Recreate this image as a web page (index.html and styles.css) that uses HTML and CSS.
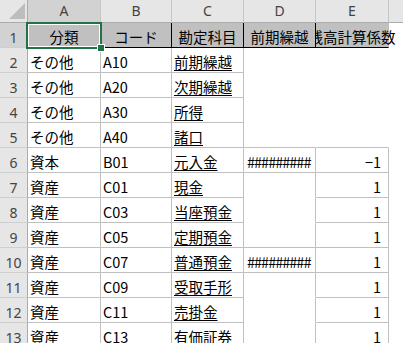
FILE: index.html
```html
<!DOCTYPE html>
<html lang="ja">
<head>
    <meta charset="UTF-8">
    <meta name="viewport" content="width=device-width, initial-scale=1.0">
    <title>勘定科目</title>
    <link rel="stylesheet" href="styles.css">
</head>
<body>
    <div class="sheet">
        <!-- column headers -->
        <div class="corner"></div>
        <div class="hd sel">A</div>
        <div class="hd">B</div>
        <div class="hd">C</div>
        <div class="hd">D</div>
        <div class="hd">E</div>
        <div class="hd">F</div>

        <!-- row 1: titles -->
        <div class="rh sel">1</div>
        <div class="c ttl">分類</div>
        <div class="c ttl">コード</div>
        <div class="c ttl">勘定科目</div>
        <div class="c ttl">前期繰越</div>
        <div class="c ttl last">残高計算係数</div>
        <div class="c"></div>

        <div class="rh">2</div>
        <div class="c g">その他</div>
        <div class="c g">A10</div>
        <div class="c g"><span class="u">前期繰越</span></div>
        <div class="c"></div>
        <div class="c"></div>
        <div class="c"></div>

        <div class="rh">3</div>
        <div class="c g">その他</div>
        <div class="c g">A20</div>
        <div class="c g"><span class="u">次期繰越</span></div>
        <div class="c"></div>
        <div class="c"></div>
        <div class="c"></div>

        <div class="rh">4</div>
        <div class="c g">その他</div>
        <div class="c g">A30</div>
        <div class="c g"><span class="u">所得</span></div>
        <div class="c"></div>
        <div class="c"></div>
        <div class="c"></div>

        <div class="rh">5</div>
        <div class="c g">その他</div>
        <div class="c g">A40</div>
        <div class="c g"><span class="u">諸口</span></div>
        <div class="c gb"></div>
        <div class="c gb"></div>
        <div class="c"></div>

        <div class="rh">6</div>
        <div class="c g">資本</div>
        <div class="c g">B01</div>
        <div class="c g"><span class="u">元入金</span></div>
        <div class="c g hash">#########</div>
        <div class="c g num">−1</div>
        <div class="c"></div>

        <div class="rh">7</div>
        <div class="c g">資産</div>
        <div class="c g">C01</div>
        <div class="c g"><span class="u">現金</span></div>
        <div class="c gr"></div>
        <div class="c g num">1</div>
        <div class="c"></div>

        <div class="rh">8</div>
        <div class="c g">資産</div>
        <div class="c g">C03</div>
        <div class="c g"><span class="u">当座預金</span></div>
        <div class="c gr"></div>
        <div class="c g num">1</div>
        <div class="c"></div>

        <div class="rh">9</div>
        <div class="c g">資産</div>
        <div class="c g">C05</div>
        <div class="c g"><span class="u">定期預金</span></div>
        <div class="c g"></div>
        <div class="c g num">1</div>
        <div class="c"></div>

        <div class="rh">10</div>
        <div class="c g">資産</div>
        <div class="c g">C07</div>
        <div class="c g"><span class="u">普通預金</span></div>
        <div class="c g hash">#########</div>
        <div class="c g num">1</div>
        <div class="c"></div>

        <div class="rh">11</div>
        <div class="c g">資産</div>
        <div class="c g">C09</div>
        <div class="c g"><span class="u">受取手形</span></div>
        <div class="c gr"></div>
        <div class="c g num">1</div>
        <div class="c"></div>

        <div class="rh">12</div>
        <div class="c g">資産</div>
        <div class="c g">C11</div>
        <div class="c g"><span class="u">売掛金</span></div>
        <div class="c gr"></div>
        <div class="c g num">1</div>
        <div class="c"></div>

        <div class="rh">13</div>
        <div class="c g">資産</div>
        <div class="c g">C13</div>
        <div class="c g"><span class="u">有価証券</span></div>
        <div class="c gr"></div>
        <div class="c g num">1</div>
        <div class="c"></div>

        <!-- active cell A1 -->
        <div class="selection"><div class="handle"></div></div>
    </div>
</body>
</html>
```

FILE: styles.css
```css
/* Sheet */
html, body {
    margin: 0;
    padding: 0;
    overflow: hidden;
    background: #fff;
}
.sheet {
    position: relative;
    display: grid;
    grid-template-columns: 28px 73px 71px 72px 72px 73px 60px;
    grid-template-rows: 23px repeat(13, 25px);
    width: 403px;
    height: 343px;
    overflow: hidden;
    font-family: "Noto Sans CJK JP", sans-serif;
    font-size: 14.5px;
    color: #000;
}
.sheet > div {
    box-sizing: border-box;
    border-right: 1px solid transparent;
    border-bottom: 1px solid transparent;
    min-width: 0;
}

/* Headers */
.corner {
    position: relative;
    background: #e6e6e6;
    border-right-color: #ababab !important;
    border-bottom-color: #ababab !important;
}
.corner::after {
    content: "";
    position: absolute;
    left: 9px;
    top: 3px;
    width: 16px;
    height: 16px;
    background: #bdbdbd;
    clip-path: polygon(100% 0, 100% 100%, 0 100%);
}
.hd {
    display: flex;
    align-items: center;
    justify-content: center;
    background: #e6e6e6;
    border-right-color: #c6c6c6 !important;
    border-bottom-color: #ababab !important;
    font-family: "Noto Sans", sans-serif;
    font-size: 14px;
    color: #444;
    line-height: 22px;
}
.rh {
    display: flex;
    align-items: flex-end;
    justify-content: center;
    background: #e6e6e6;
    border-right-color: #ababab !important;
    border-bottom-color: #cfcfcf !important;
    font-family: "Noto Sans", sans-serif;
    font-size: 14px;
    color: #444;
    line-height: 17px;
    padding-bottom: 1px;
}
.hd.sel, .rh.sel {
    background: #d2d2d2;
}

/* Cells */
.c {
    display: flex;
    align-items: flex-end;
    padding: 0 2px 2px;
    line-height: 17px;
    white-space: nowrap;
}
.g {
    border-right-color: #c0c0c0 !important;
    border-bottom-color: #c0c0c0 !important;
}
.gr {
    border-right-color: #c0c0c0 !important;
}
.gb {
    border-bottom-color: #c0c0c0 !important;
}
.ttl {
    justify-content: center;
    background: #c0c0c0;
    border-right-color: #000 !important;
    border-bottom-color: #000 !important;
}
.ttl.last {
    border-right-color: transparent !important;
    clip-path: inset(0 -100px 0 0);
}
.u {
    text-decoration: underline;
    text-decoration-thickness: 1px;
    text-underline-offset: 2px;
}
.num {
    justify-content: flex-end;
    padding-right: 7px;
}
.hash {
    overflow: hidden;
    letter-spacing: -1px;
    padding-left: 3px;
}

/* Active cell */
.selection {
    position: absolute;
    left: 26px;
    top: 22px;
    width: 76px;
    height: 27px;
    border: 2px solid #217346 !important;
    box-shadow: inset 0 0 0 1px #fff;
}
.handle {
    position: absolute;
    right: -5px;
    bottom: -5px;
    width: 6px;
    height: 6px;
    background: #217346;
    border: 1px solid #fff !important;
}
```
